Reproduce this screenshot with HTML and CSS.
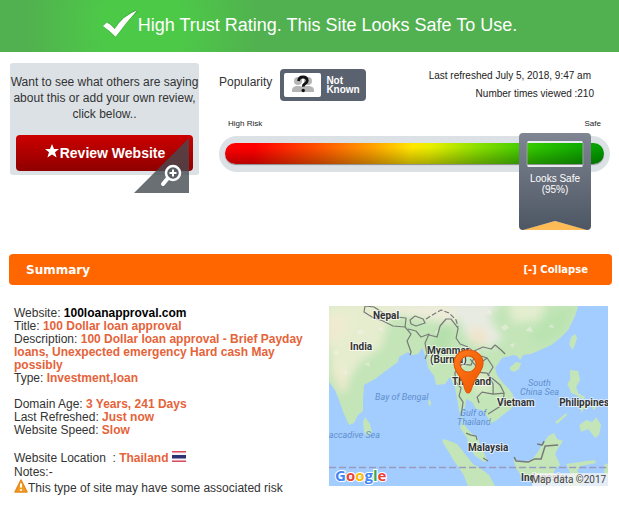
FILE: index.html
```html
<!DOCTYPE html>
<html lang="en">

<head>
  <meta charset="UTF-8">
  <meta name="viewport" content="width=device-width, initial-scale=1.0">
  <title>100loanapproval.com</title>
  <link rel="stylesheet" href="styles.css">
</head>

<body>
  <header class="banner">
    <svg class="banner-check" viewBox="0 0 37 30" aria-hidden="true">
      <path d="M1 16 L5 12 Q10 14 13 18 Q22 4 36 -1 L37 1 Q25 12 14 28 Z" fill="#2f8f2f" opacity=".5" />
      <path d="M1 16 L5 12.500 Q10 15 13 19 Q22 5 36 0 Q25 12 14 27 Q8 21 1 16 Z" fill="#fff" />
    </svg>
    <h1>High Trust Rating. This Site Looks Safe To Use.</h1>
  </header>

  <main class="container">
    <section class="top">
      <div class="review-box">
        <p>Want to see what others are saying about this or add your own review, click below..</p>
        <button type="button" class="review-btn">
          <svg viewBox="0 0 16 16" aria-hidden="true">
            <path d="M8 1l2 5h5l-4 3.200 1.600 5.300L8 11.400l-4.600 3.100L5 9.200 1 6h5z" fill="#fff" />
          </svg>
          Review Website
        </button>
        <svg class="zoom-corner" viewBox="0 0 55 55" aria-hidden="true">
          <path d="M55 0V55H0z" fill="#454b50" opacity=".8" />
          <path d="M34 40l-5 6" stroke="#fff" stroke-width="4" stroke-linecap="round" />
          <circle cx="39" cy="35" r="7" fill="#5b5f64" stroke="#fff" stroke-width="2.500" />
          <path d="M39 31.500v7M35.500 35h7" stroke="#fff" stroke-width="2" />
        </svg>
      </div>

      <div class="rating">
        <div class="rating-info">
          <span class="popularity">Popularity</span>
          <div class="badge">
            <svg viewBox="0 0 37 24" aria-hidden="true">
              <rect width="37" height="24" rx="2" fill="#fff" />
              <g fill="#b5b5b5">
                <circle cx="14" cy="8" r="4" />
                <circle cx="24" cy="8" r="4" />
                <path d="M8 19v-2q0-3 4-4h4q4 1 4 4v2zM18 19v-2q0-3 4-4h4q4 1 4 4v2z" />
              </g>
              <path d="M14.500 8q.5-4 4.500-4t4.300 3.500q0 2-2.300 3.300-1.800 1-1.800 3" fill="none" stroke="#111" stroke-width="2.800" />
              <circle cx="19.200" cy="17.500" r="1.700" fill="#111" />
            </svg>
            <span>Not<br>Known</span>
          </div>
          <div class="meta">
            <p>Last refreshed July 5, 2018, 9:47 am</p>
            <p>Number times viewed :210</p>
          </div>
        </div>

        <div class="scale-labels">
          <span>High Risk</span>
          <span>Safe</span>
        </div>
        <div class="scale">
          <div class="scale-bar"></div>
          <div class="marker">
            <svg viewBox="0 0 72 97" aria-hidden="true">
              <defs>
                <linearGradient id="slate" x1="0" y1="0" x2="0" y2="1">
                  <stop offset="0" stop-color="#7f8592" />
                  <stop offset="1" stop-color="#4d5663" />
                </linearGradient>
              </defs>
              <path d="M3 97L36 88L69 97z" fill="#ffbb55" />
              <path d="M4 0H68Q72 0 72 4V93Q72 97 68 97L36 88L4 97Q0 97 0 93V4Q0 0 4 0zM10 8Q8 8 8 10V32Q8 34 10 34H62Q64 34 64 32V10Q64 8 62 8z" fill="url(#slate)" fill-rule="evenodd" />
              <path d="M8 10V32M64 10V32" stroke="#9aa39f" />
              <path d="M9 9H63M9 33H63" stroke="#e8ecee" stroke-width="2" />
            </svg>
            <span>Looks Safe<br>(95%)</span>
          </div>
        </div>
      </div>
    </section>

    <div class="summary-head">
      <h2>Summary</h2>
      <button type="button" class="collapse-btn">[-] Collapse</button>
    </div>

    <section class="summary">
      <div class="details">
        <p>Website: <strong class="site">100loanapproval.com</strong></p>
        <p>Title: <strong>100 Dollar loan approval</strong></p>
        <p>Description: <strong>100 Dollar loan approval - Brief Payday loans, Unexpected emergency Hard cash May possibly</strong></p>
        <p class="group-end">Type: <strong>Investment,loan</strong></p>
        <p>Domain Age: <strong>3 Years, 241 Days</strong></p>
        <p>Last Refreshed: <strong>Just now</strong></p>
        <p class="group-end">Website Speed: <strong>Slow</strong></p>
        <p class="location">Website Location &nbsp;: <strong>Thailand</strong>
          <svg class="flag" viewBox="0 0 14 11" role="img" aria-label="Thailand">
            <path d="M0 0h14v11H0z" fill="#f4f3f8" />
            <path d="M0 0h14v1.500H0zM0 9.500h14V11H0z" fill="#d9495c" />
            <path d="M0 4h14v3.500H0z" fill="#2c3175" />
          </svg>
        </p>
        <p>Notes:-</p>
        <p class="note">
          <svg viewBox="0 0 14 14" aria-hidden="true">
            <path d="M7 1L13 13H1z" fill="#f79a20" stroke="#e58a1c" stroke-width="1.500" stroke-linejoin="round" />
            <path d="M7 4.500v4" stroke="#fff" stroke-width="2" />
            <circle cx="7" cy="11" r="1.100" fill="#fff" />
          </svg>This type of site may have some associated risk
        </p>
      </div>

      <svg class="map" viewBox="0 0 279 180" role="img" aria-label="Map of Thailand">
        <defs>
          <linearGradient id="pin" x1="0" y1="0" x2="1" y2="1">
            <stop offset="0" stop-color="#ff7a1c" />
            <stop offset="1" stop-color="#ee5500" />
          </linearGradient>
          <clipPath id="land">
            <path d="M0 0H249L246 10L243 16L239 24L231 32L222 39L211 44L202 48L194 49L191 54L188 50L184 49L173 52L166 62L168 69L174 77L180 83L184 89L185 96L183 102L174 109L168 114L160 118L159 112L153 104L147 103L143 96L137 93L136 101L133 108L134 117L141 126L149 132L151 139L155 147L158 154L155 156L146 150L139 139L138 132L131 122L133 114L130 105L128 93L126 82L121 71L116 78L107 79L105 70L99 62L97 52L93 42L89 48L83 49L79 46L70 51L69 56L62 61L58 64L46 73L35 79L34 94L34 105L29 109L25 117L20 119L15 108L10 94L6 84L0 76z" />
          </clipPath>
          <filter id="soft">
            <feGaussianBlur stdDeviation="4" />
          </filter>
        </defs>
        <rect width="279" height="180" fill="#a3ccff" />

        <g fill="#c3e5b8">
          <path d="M0 0H249L246 10L243 16L239 24L231 32L222 39L211 44L202 48L194 49L191 54L188 50L184 49L173 52L166 62L168 69L174 77L180 83L184 89L185 96L183 102L174 109L168 114L160 118L159 112L153 104L147 103L143 96L137 93L136 101L133 108L134 117L141 126L149 132L151 139L155 147L158 154L155 156L146 150L139 139L138 132L131 122L133 114L130 105L128 93L126 82L121 71L116 78L107 79L105 70L99 62L97 52L93 42L89 48L83 49L79 46L70 51L69 56L62 61L58 64L46 73L35 79L34 94L34 105L29 109L25 117L20 119L15 108L10 94L6 84L0 76z" />
          <path d="M36 111L41 118L43 126L38 130L35 126L34 116z" />
          <path d="M181 61L187 56L192 57L190 63L185 66L181 64z" />
          <path d="M246 28L248 32L245 41L243 44L240 38L242 31z" />
          <path d="M241 64L249 65L251 74L247 81L249 87L256 91L254 94L247 89L242 87L240 82L238 78L241 74z" />
          <path d="M252 98L257 94L260 100L257 104L255 101L253 107L251 103zM262 96L265 94L267 102L264 104z" />
          <path d="M250 119L257 114L263 116L267 111L272 119L270 129L266 132L259 123L252 126z" />
          <path d="M226 116L237 107L238 109L228 118z" />
          <path d="M113 133L118 134L128 138L136 148L144 158L152 163L160 169L166 180H139L134 168L125 155L119 145L114 137z" />
          <path d="M184 153L191 156L202 154L208 147L213 139L219 130L225 127L228 133L234 135L229 142L226 148L231 159L226 163L222 176L216 179L202 174L192 170L187 162z" />
          <path d="M237 158Q250 156 265 154L267 157L251 160L248 165L254 172L251 180H238L241 167z" />
          <path d="M275 159l4-2v14l-4-4z" />
          <path d="M126 155l3 1-1 2zM134 166l3 3-2 1z" />
          <path d="M100 93l2 3-1 5-2-4z" />
        </g>

        <g clip-path="url(#land)">
          <g filter="url(#soft)">
            <path d="M-5-5H70L60 15L52 42L30 57L18 78L3 70z" fill="#e6edcf" />
            <path d="M-5 8L22 10L14 31L-5 42zM3 57L14 61L20 84L9 87z" fill="#f2ead0" opacity=".8" />
            <path d="M50-5H120L132 13L118 17L95 13L65 9z" fill="#eeecd9" />
            <path d="M120-5H172L160 12L174 32L159 43L139 35L132 17z" fill="#e8ebe2" />
            <path d="M140 21L159 25L157 40L144 38z" fill="#f1e4ca" />
            <path d="M178-5L218-5L210 14L184 17z" fill="#e4edd0" />
            <path d="M145 64L158 67L165 84L151 88L142 80z" fill="#dcebc6" />
            <path d="M112 18L125 24L115 52L101 43z" fill="#b4dfaa" />
            <path d="M218 10L244 0L235 25L211 39L201 31z" fill="#b9e3b0" />
          </g>
          <g fill="#f4f1e7" opacity=".5">
            <path d="M4 46l4-2 2 4-4 1zM14 66l3-4 2 6-3 2zM27 26l5-3 4 4-6 2zM48 23l5-2 2 4zM36 58l4-2 1 5zM172 21l5-3 3 4-5 3zM196 25l5-5 3 6zM180 39l6-2-2 5zM156 7l5-4 2 6zM219 21l4-3 2 4zM143 47l6-4 2 5zM105 27l5-5-1 7z" />
          </g>
        </g>

        <g fill="none" stroke="#777b78" stroke-width="1.200" stroke-linejoin="round">
          <path d="M36 0L35 6L43 11L54 15L64 20L76 21L77 12L67 11L54 7L45 1z" />
          <path d="M81 14L86 10L94 13L96 17L87 20L82 18z" />
          <path d="M76 21L82 28L78 35L82 46L81 49M79 23L87 25L92 31L100 28L96 37L98 48L96 53" />
          <path d="M100 29L108 31L111 20L117 13L122 13L129 22L127 32L131 38L139 41" />
          <path d="M97 13L105 8L112 4L120 7L127 14L129 21" stroke-dasharray="5 2" />
          <path d="M140 41L146 49L142 59L133 58L126 66L126 75L132 82L130 90L134 96L132 110" />
          <path d="M141 53L147 60L158 52L164 61L159 69L171 79L175 87L174 96L170 101L159 108M148 66L158 67L164 78L164 88L153 86L148 91L150 97M164 88L175 87" />
          <path d="M145 45L154 41L162 43L166 39L172 44L176 48M152 50L158 52" />
          <path d="M137 127L142 129L147 130L148 134M154 152L159 155" />
          <path d="M185 151L187 155L199 156L205 153L212 153L216 140L229 139M208 138L213 139L215 135" stroke-width="1.500" />
        </g>
        <path d="M0 161.500H279" stroke="#9a9abf" stroke-width="1.500" stroke-dasharray="7 3" />

        <g class="map-land">
          <text x="44" y="13">Nepal</text>
          <text x="21" y="44">India</text>
          <text x="98" y="48">Myanmar</text>
          <text x="101" y="57">(Burma)</text>
          <text x="123" y="79">Thailand</text>
          <text x="168" y="100">Vietnam</text>
          <text x="230" y="100">Philippines</text>
          <text x="139" y="145">Malaysia</text>
          <text x="192" y="175">Indonesia</text>
        </g>
        <g class="map-sea">
          <text x="46" y="94">Bay of Bengal</text>
          <text x="-5" y="132">Laccadive Sea</text>
          <text x="199" y="80">South</text>
          <text x="191" y="89">China Sea</text>
          <text x="131" y="110">Gulf of</text>
          <text x="128" y="119">Thailand</text>
        </g>

        <path d="M139 87C136 87 136 83 134 77C131 69 124 65 125 56C126 48 132 44 139 44C147 44 154 49 154 57C154 65 147 70 144 78C142 83 142 87 139 87zM139 50A8 8 0 1 0 139 66A8 8 0 1 0 139 50z" fill="url(#pin)" stroke="#df5408" fill-rule="evenodd" />

        <text class="map-logo" x="6" y="175"><tspan fill="#4285f4">G</tspan><tspan fill="#ea4335">o</tspan><tspan fill="#fbbc05">o</tspan><tspan fill="#4285f4">g</tspan><tspan fill="#34a853">l</tspan><tspan fill="#ea4335">e</tspan></text>
        <rect x="203" y="167" width="76" height="13" fill="#f5f5f5" opacity=".8" />
        <text class="map-credit" x="277" y="177">Map data ©2017</text>
      </svg>
    </section>
  </main>
</body>

</html>
```

FILE: styles.css
```css
* {
  margin: 0;
  padding: 0;
  box-sizing: border-box;
}

body {
  background-color: #fff;
  color: #333;
  font-family: "Liberation Sans", Arial, sans-serif;
  font-size: 12px;
}

button {
  border: none;
  color: #fff;
  cursor: pointer;
}

.banner {
  display: flex;
  justify-content: center;
  align-items: center;
  padding: 7px 8px 9px;
  background: radial-gradient(circle at 23% 50%, #4dc948 0, #4dc948 40px, #51b04f 120px);
  color: #fff;
}

.banner-check {
  width: 36px;
  height: 30px;
}

.banner h1 {
  font-size: 18px;
  font-weight: normal;
  line-height: 36px;
}

.container {
  padding: 11px 7px 8px 9px;
}

.top {
  display: flex;
  align-items: flex-start;
  gap: 20px;
  padding: 0 2px 0 1px;
}

.review-box {
  position: relative;
  width: 189px;
  flex-shrink: 0;
  padding: 11px 6px 4px;
  border-radius: 3px;
  background-color: #dce1e5;
  text-align: center;
}

.review-box p {
  margin: 0 -6px 13px;
  line-height: 16px;
}

.review-btn {
  display: flex;
  justify-content: center;
  align-items: center;
  width: 100%;
  height: 36px;
  border-radius: 4px;
  background: linear-gradient(#cc0000, #8f0000);
  font: bold 14px "Liberation Sans", Arial, sans-serif;
}

.review-btn svg {
  width: 16px;
  height: 16px;
  margin-bottom: 4px;
}

.zoom-corner {
  position: absolute;
  right: 10px;
  bottom: -18px;
  width: 55px;
  height: 55px;
}

.rating {
  flex: 1;
}

.rating-info {
  display: flex;
  align-items: flex-start;
  padding: 6px 16px 0 0;
}

.popularity {
  line-height: 26px;
}

.badge {
  display: flex;
  align-items: center;
  gap: 5px;
  width: 86px;
  height: 32px;
  margin-left: 8px;
  padding-left: 4px;
  border-radius: 4px;
  background-color: #5a6270;
  color: #fff;
  font-size: 10px;
  font-weight: bold;
  line-height: 9px;
}

.badge svg {
  width: 37px;
  height: 24px;
}

.meta {
  margin-top: -2px;
  margin-left: auto;
  font-size: 10px;
  line-height: 18px;
  text-align: right;
}

.meta p:first-child {
  padding-right: 3px;
}

.meta,
.scale-labels {
  color: #222;
}

.scale-labels {
  display: flex;
  justify-content: space-between;
  padding: 16px 9px 7px;
  font-size: 8px;
  line-height: 10px;
}

.scale {
  position: relative;
  padding: 7px 6px 8px;
  border-radius: 18px;
  background-color: #dce1e5;
}

.scale-bar {
  height: 21px;
  border-radius: 11px;
  background:
    linear-gradient(rgba(0, 0, 0, 0) 20%, rgba(0, 0, 0, 0.28)),
    linear-gradient(100deg, #f00 8%, #ff5a00 26%, #ff9d00 38%, #ffe600 49%, #e8ee00 54%, #8be000 66%, #2cc400 82%, #009a00);
  box-shadow: 0 1px 1px #8b8b8b;
}

.marker {
  position: absolute;
  top: -3px;
  right: 19px;
  width: 72px;
  height: 97px;
  padding-top: 40px;
  color: #fff;
  font-size: 10px;
  line-height: 11px;
  text-align: center;
}

.marker svg {
  position: absolute;
  inset: 0;
}

.marker span {
  position: relative;
}

.summary-head {
  display: flex;
  justify-content: space-between;
  align-items: center;
  height: 31px;
  margin-top: 79px;
  padding: 0 24px 0 17px;
  border-radius: 4px;
  background-color: #ff6600;
  color: #fff;
}

.summary-head h2,
.collapse-btn {
  font-family: "DejaVu Sans", Verdana, sans-serif;
  font-weight: bold;
}

.summary-head h2 {
  font-size: 12px;
}

.collapse-btn {
  background: none;
  font-size: 10px;
}

.summary {
  display: flex;
  justify-content: space-between;
  align-items: flex-start;
  padding: 21px 4px 0 5px;
}

.details {
  flex: 1;
  max-width: 290px;
  padding-top: 1px;
  line-height: 13px;
}

.details strong {
  color: #e5633a;
}

.details .site {
  color: #000;
}

.group-end {
  margin-bottom: 13px;
}

.location {
  line-height: 16px;
}

.flag {
  width: 14px;
  height: 11px;
}

.note {
  line-height: 18px;
}

.note svg {
  width: 14px;
  height: 14px;
  vertical-align: -1px;
}

.map {
  width: 47%;
  max-width: 420px;
}

.map-land {
  font: bold 10px Roboto, sans-serif;
  fill: #333;
  stroke: #fff;
  stroke-width: 2px;
  stroke-opacity: 0.6;
  paint-order: stroke;
}

.map-sea {
  font: italic 9px Roboto, sans-serif;
  fill: #6090cc;
}

.map-logo {
  font: bold 15px "Open Sans", sans-serif;
  stroke: #fff;
  stroke-width: 2px;
  paint-order: stroke;
}

.map-credit {
  font: 10px Roboto, sans-serif;
  fill: #444;
  text-anchor: end;
}
```
